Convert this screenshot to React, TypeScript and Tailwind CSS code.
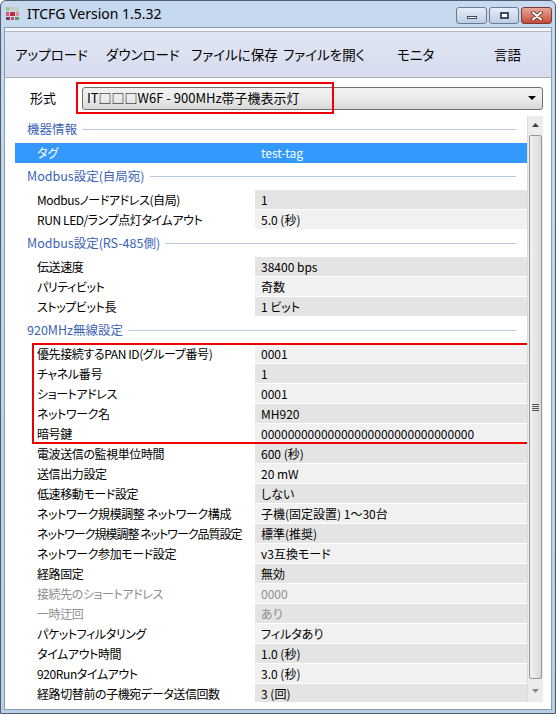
import React from "react";

type Row = { label: string; value: string; disabled?: boolean; selected?: boolean; tight?: boolean };
type Section = { title: string; rows: Row[]; boxed?: number };

const FONT = "font-['Noto_Sans_CJK_JP','Noto_Sans',sans-serif] [font-feature-settings:'palt']";

const SECTIONS: Section[] = [
    { title: "機器情報", rows: [{ label: "タグ", value: "test-tag", selected: true }] },
    {
        title: "Modbus設定(自局宛)",
        rows: [
            { label: "Modbusノードアドレス(自局)", value: "1" },
            { label: "RUN LED/ランプ点灯タイムアウト", value: "5.0 (秒)" },
        ],
    },
    {
        title: "Modbus設定(RS-485側)",
        rows: [
            { label: "伝送速度", value: "38400 bps" },
            { label: "パリティビット", value: "奇数" },
            { label: "ストップビット長", value: "1 ビット" },
        ],
    },
    {
        title: "920MHz無線設定",
        boxed: 5,
        rows: [
            { label: "優先接続するPAN ID(グループ番号)", value: "0001" },
            { label: "チャネル番号", value: "1" },
            { label: "ショートアドレス", value: "0001" },
            { label: "ネットワーク名", value: "MH920" },
            { label: "暗号鍵", value: "00000000000000000000000000000000" },
            { label: "電波送信の監視単位時間", value: "600 (秒)" },
            { label: "送信出力設定", value: "20 mW" },
            { label: "低速移動モード設定", value: "しない" },
            { label: "ネットワーク規模調整 ネットワーク構成", value: "子機(固定設置) 1～30台" },
            { label: "ネットワーク規模調整 ネットワーク品質設定", value: "標準(推奨)", tight: true },
            { label: "ネットワーク参加モード設定", value: "v3互換モード" },
            { label: "経路固定", value: "無効" },
            { label: "接続先のショートアドレス", value: "0000", disabled: true },
            { label: "一時迂回", value: "あり", disabled: true },
            { label: "パケットフィルタリング", value: "フィルタあり" },
            { label: "タイムアウト時間", value: "1.0 (秒)" },
            { label: "920Runタイムアウト", value: "3.0 (秒)" },
            { label: "経路切替前の子機宛データ送信回数", value: "3 (回)" },
        ],
    },
];

const MENU = [
    { label: "アップロード", w: "w-[91px]" },
    { label: "ダウンロード", w: "w-[85px]" },
    { label: "ファイルに保存", w: "w-[92px]" },
    { label: "ファイルを開く", w: "w-[114px]" },
    { label: "モニタ", w: "w-[97px]" },
    { label: "言語", w: "w-[50px]" },
];

function AppIcon() {
    return (
        <svg width="15" height="15" viewBox="0 0 15 15">
            <rect x="1" y="1" width="4" height="4" fill="#9fd08a" />
            <rect x="6" y="1" width="3" height="3" fill="#e7b4c8" />
            <rect x="10" y="1" width="4" height="4" fill="#b7d9a8" />
            <rect x="1" y="6" width="3" height="4" fill="#d45a7a" />
            <rect x="5" y="6" width="5" height="4" fill="#c6283c" />
            <rect x="11" y="6" width="3" height="4" fill="#e58aa6" />
            <rect x="1" y="11" width="4" height="3" fill="#7c3a5a" />
            <rect x="6" y="11" width="3" height="3" fill="#d8435e" />
            <rect x="10" y="11" width="4" height="3" fill="#5a9a5a" />
        </svg>
    );
}

function CaptionButtons() {
    return (
        <div className="flex items-start gap-[2px] mt-[6px]">
            <div className="w-[31px] h-[17px] rounded-[3px] border border-[#6a7a92] bg-gradient-to-b from-[#e6eef8] to-[#bccde3] flex items-center justify-center">
                <div className="w-[10px] h-[3px] bg-white border border-[#3b4b63] mt-[4px]" />
            </div>
            <div className="w-[30px] h-[17px] rounded-[3px] border border-[#6a7a92] bg-gradient-to-b from-[#e6eef8] to-[#bccde3] flex items-center justify-center">
                <div className="w-[9px] h-[7px] border-[2px] border-[#3b4b63] bg-white" />
            </div>
            <div className="w-[31px] h-[17px] rounded-[3px] border border-[#7a3a32] bg-gradient-to-b from-[#e9a799] to-[#c5493a] flex items-center justify-center">
                <svg width="12" height="10" viewBox="0 0 12 10">
                    <path d="M2 1.5 L10 8.5 M10 1.5 L2 8.5" stroke="#4b1f1a" strokeWidth="3.6" strokeLinecap="round" />
                    <path d="M2 1.5 L10 8.5 M10 1.5 L2 8.5" stroke="#ffffff" strokeWidth="2.2" strokeLinecap="round" />
                </svg>
            </div>
        </div>
    );
}

function ScrollBar() {
    return (
        <div className="w-[16px] flex flex-col bg-[#ececec] border-l border-[#dcdcdc]">
            <div className="h-[18px] flex items-center justify-center">
                <svg width="7" height="4" viewBox="0 0 7 4">
                    <path d="M0 4 L3.5 0 L7 4 Z" fill="#404040" />
                </svg>
            </div>
            <div className="flex-1 mx-[1px] my-[1px] rounded-[2px] border border-[#979797] bg-gradient-to-r from-[#f2f2f2] to-[#d9d9d9] flex items-center justify-center">
                <div className="flex flex-col gap-[1px]">
                    <div className="w-[7px] h-[1px] bg-[#555]" />
                    <div className="w-[7px] h-[1px] bg-[#555]" />
                    <div className="w-[7px] h-[1px] bg-[#555]" />
                    <div className="w-[7px] h-[1px] bg-[#555]" />
                </div>
            </div>
            <div className="h-[22px] flex items-center justify-center">
                <svg width="7" height="4" viewBox="0 0 7 4">
                    <path d="M0 0 L7 0 L3.5 4 Z" fill="#8a8a8a" />
                </svg>
            </div>
        </div>
    );
}

function PropertyRow({ row, index }: { row: Row; index: number }) {
    if (row.selected) {
        return (
            <div className="h-[20px] flex bg-[#3399ff] text-white">
                <div className="w-[240px] pl-[22px] leading-[20px]">{row.label}</div>
                <div className="flex-1 pl-[6px] leading-[20px]">{row.value}</div>
            </div>
        );
    }
    const shade = index % 2 === 1 ? "bg-[#e4e4e4]" : "bg-[#f1f1f1]";
    const text = row.disabled ? "text-[#8e8e8e]" : "text-black";
    const track = row.tight ? "tracking-[-1px]" : "tracking-[-0.4px]";
    return (
        <div className={`h-[20px] flex border-b border-white ${text}`}>
            <div className={`w-[240px] pl-[22px] leading-[19px] whitespace-nowrap overflow-hidden ${track}`}>{row.label}</div>
            <div className={`flex-1 pl-[6px] leading-[19px] whitespace-nowrap overflow-hidden ${shade}`}>{row.value}</div>
        </div>
    );
}

function Category({ title }: { title: string }) {
    return (
        <div className="h-[27px] flex items-center pl-[12px] pr-[11px] gap-[5px]">
            <span className="text-[#3b64b5] text-[12.5px] whitespace-nowrap">{title}</span>
            <div className="flex-1 h-[1px] bg-[#b9c7e2]" />
        </div>
    );
}

export default function App() {
    let counter = 0;
    return (
        <div className={`w-[559px] h-[718px] bg-white ${FONT}`}>
            <div className="w-[556px] h-[714px] border border-[#4f5c6e] rounded-t-[6px] bg-gradient-to-b from-[#c6d9ee] to-[#b8cfe8] px-[3px] pb-[3px] flex flex-col">
                {/* title bar */}
                <div className="h-[26px] flex items-start shrink-0">
                    <div className="mt-[5px] ml-[1px]">
                        <AppIcon />
                    </div>
                    <span className="ml-[7px] mt-[4px] text-[14px] text-black font-['Noto_Sans',sans-serif] leading-[18px]">
                        ITCFG Version 1.5.32
                    </span>
                    <div className="flex-1" />
                    <CaptionButtons />
                </div>

                {/* client */}
                <div className="flex-1 flex flex-col bg-white border border-[#8b9bb0] min-h-0">
                    <div className="h-[4px] bg-[#f4f6fb] border-b border-[#b3b8c2]" />
                    <div className="h-[46px] flex items-center pl-[10px] bg-gradient-to-b from-[#e1e6f3] to-[#d6dcee] border-b border-[#a9acb3] text-[13.5px] text-black">
                        {MENU.map((m) => (
                            <span key={m.label} className={`${m.w} whitespace-nowrap`}>
                                {m.label}
                            </span>
                        ))}
                    </div>

                    {/* format selector */}
                    <div className="h-[38px] flex items-center pl-[25px] pr-[8px] pt-[2px] text-[13px]">
                        <span className="w-[52px]">形式</span>
                        <div className="relative flex-1 h-[23px]">
                            <div className="h-full rounded-[3px] border border-[#707070] bg-gradient-to-b from-[#f2f2f2] via-[#ebebeb] to-[#d8d8d8] flex items-center pl-[4px] pr-[6px]">
                                <span className="flex-1 text-black">IT□□□W6F - 900MHz帯子機表示灯</span>
                                <svg width="8" height="4" viewBox="0 0 8 4">
                                    <path d="M0 0 L8 0 L4 4 Z" fill="#000" />
                                </svg>
                            </div>
                            <div className="absolute left-[-6px] top-[-5px] w-[258px] h-[32px] border-2 border-[#ee0000]" />
                        </div>
                    </div>

                    {/* property grid */}
                    <div className="flex ml-[10px] mr-[8px] h-[586px] overflow-hidden text-[12px]">
                        <div className="flex-1 flex flex-col overflow-hidden">
                            {SECTIONS.map((s) => {
                                const rows = s.rows.map((r) => ({ r, i: counter++ }));
                                const boxed = s.boxed ? rows.slice(0, s.boxed) : [];
                                const rest = s.boxed ? rows.slice(s.boxed) : rows;
                                return (
                                    <div key={s.title} className="flex flex-col">
                                        <Category title={s.title} />
                                        {boxed.length > 0 && (
                                            <div className="relative">
                                                {boxed.map(({ r, i }) => (
                                                    <PropertyRow key={r.label} row={r} index={i} />
                                                ))}
                                                <div className="absolute left-[17px] right-[-2px] top-[-1px] bottom-[0px] border-2 border-[#ee0000]" />
                                            </div>
                                        )}
                                        {rest.map(({ r, i }) => (
                                            <PropertyRow key={r.label} row={r} index={i} />
                                        ))}
                                    </div>
                                );
                            })}
                        </div>
                        <ScrollBar />
                    </div>
                </div>
            </div>
        </div>
    );
}
